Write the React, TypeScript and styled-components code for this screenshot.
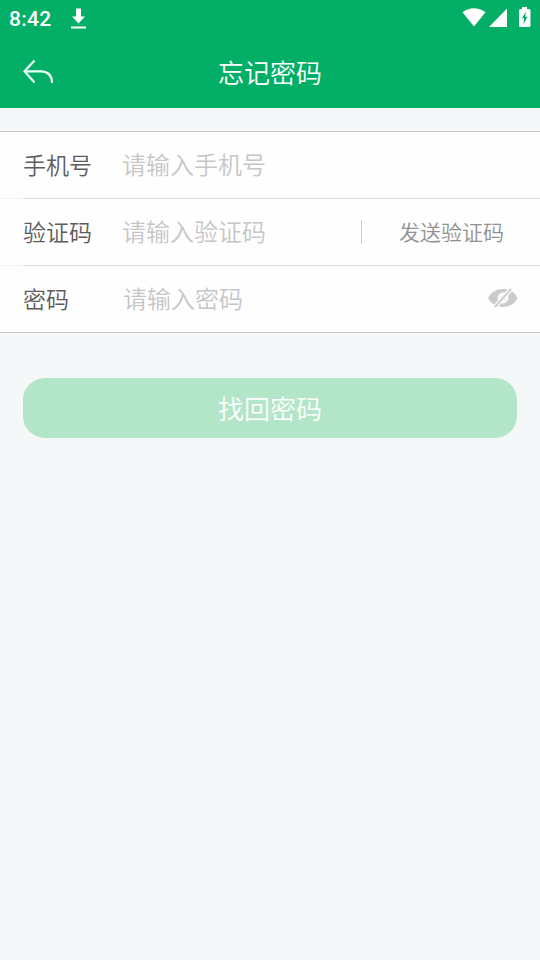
import React from "react";
import styled, { createGlobalStyle } from "styled-components";

const GlobalStyle = createGlobalStyle`
  * { box-sizing: border-box; }
  body {
    margin: 0;
    background: #f4f8f9;
    font-family: Roboto, "Noto Sans CJK SC", sans-serif;
  }
`;

const Screen = styled.div`
  display: flex;
  flex-direction: column;
  width: 540px;
  height: 960px;
  overflow: hidden;
  background: #f4f8f9;
`;

const StatusBar = styled.div`
  display: flex;
  align-items: flex-start;
  justify-content: space-between;
  height: 36px;
  padding: 0 9px;
  background: #03af66;
  color: #fff;
`;

const StatusGroup = styled.div`
  display: flex;
  height: 36px;
`;

const Clock = styled.span`
  width: 61px;
  font-size: 21px;
  font-weight: 500;
  line-height: 38px;
  letter-spacing: 0.3px;
`;

const Glyph = styled.svg`
  display: block;
  flex: none;
`;

const Header = styled.header`
  display: grid;
  grid-template-columns: 60px 1fr 60px;
  height: 72px;
  padding: 0 23px;
  background: #03af66;
  color: #fff;
`;

const BackButton = styled.button`
  display: flex;
  align-items: flex-start;
  padding: 23px 0 0;
  border: 0;
  background: none;
  color: #e9fff5;
`;

const Title = styled.h1`
  margin: 0;
  font-size: 26px;
  font-weight: 350;
  line-height: 71px;
  text-align: center;
  font-family: "Noto Sans CJK SC", sans-serif;
`;

const Form = styled.form`
  display: flex;
  flex-direction: column;
  flex: 1;
`;

const FieldList = styled.div`
  margin-top: 23px;
  border-top: 1px solid #c9cbca;
  border-bottom: 1px solid #c9cbca;
  background: #fefefe;
`;

const Field = styled.div`
  display: flex;
  align-items: center;
  height: 67px;
  padding: 0 0 1px 23px;
  background: linear-gradient(to right, #f5f5f5 23px, #dddddd 23px) bottom / 100% 1px no-repeat;
  &:last-child {
    height: 66px;
    padding-bottom: 0;
    background: none;
  }
`;

const Label = styled.label`
  flex: none;
  width: 99px;
  padding-bottom: 2px;
  color: #5c5c5c;
  font: 350 23px/34px "Noto Sans CJK SC", sans-serif;
`;

const Input = styled.input<{ $indent?: number }>`
  flex: 1;
  min-width: 0;
  height: 40px;
  padding: 0 0 3px ${(p) => p.$indent ?? 0}px;
  border: 0;
  outline: 0;
  background: transparent;
  font: 350 24px/36px "Noto Sans CJK SC", sans-serif;
  &::placeholder {
    color: #c6c6c6;
    opacity: 1;
  }
`;

const SendCode = styled.button`
  width: 179px;
  height: 24px;
  padding: 0 0 2px 1px;
  border: 0;
  border-left: 1px solid #cccccc;
  background: none;
  color: #919191;
  font: 350 21px/22px "Noto Sans CJK SC", sans-serif;
`;

const EyeButton = styled.button`
  margin-right: 22px;
  padding: 0 0 2px;
  border: 0;
  background: none;
`;

const Submit = styled.button`
  height: 60px;
  margin: 45px 23px 0;
  padding: 0;
  border: 0;
  border-radius: 22px;
  background: #b3e5c8;
  color: #fff;
  font: 350 26px/60px "Noto Sans CJK SC", sans-serif;
`;

export default function App() {
  return (
    <>
      <GlobalStyle />
      <Screen>
        <StatusBar>
          <StatusGroup>
            <Clock>8:42</Clock>
            <Glyph width="17" height="36" viewBox="70 0 17 36" fill="#fff">
              <path d="M76 8.500h5v8h4L78.500 23.500 72 16.500h4zM71 26.500h15v2H71z" />
            </Glyph>
          </StatusGroup>
          <Glyph width="69" height="36" viewBox="462 0 69 36" fill="#fff">
            <path d="M462.500 12.200Q474 4.500 485.500 12.200L474 26.500z" />
            <path d="M507 8.500V27H489z" />
            <path d="M522 7h5v2h2q1.500 0 1.500 1.500V25.500q0 1.500-1.500 1.500h-8.500q-1.500 0-1.500-1.500V10.500q0-1.500 1.500-1.500h1.500z" />
            <path d="M526 11.500L522 18.200h2.200L523.500 24l4-7.300h-2.300z" fill="#03af66" />
          </Glyph>
        </StatusBar>
        <Header>
          <BackButton type="button" aria-label="返回">
            <Glyph width="32" height="26" viewBox="0 0 32 26" fill="none" stroke="currentColor" strokeWidth="2.200">
              <path d="M11.500 1.500L1.500 12.300 11.500 23.500M1.500 12.300H18C25 12.500 29 16 29 24" />
            </Glyph>
          </BackButton>
          <Title>忘记密码</Title>
        </Header>
        <Form>
          <FieldList>
            <Field>
              <Label htmlFor="phone">手机号</Label>
              <Input id="phone" type="tel" placeholder="请输入手机号" />
            </Field>
            <Field>
              <Label htmlFor="code">验证码</Label>
              <Input id="code" placeholder="请输入验证码" />
              <SendCode type="button">发送验证码</SendCode>
            </Field>
            <Field>
              <Label htmlFor="password">密码</Label>
              <Input id="password" type="password" placeholder="请输入密码" $indent={1} />
              <EyeButton type="button" aria-label="显示密码">
                <Glyph width="30" height="20" viewBox="0 0 30 20">
                  <path d="M0 10C3 4 9 1 15 1S27 4 29.500 10C27 16 21 19 15 19S3 16 0 10z" fill="#cbcbcb" />
                  <circle cx="15" cy="10" r="5.400" fill="#fefefe" />
                  <circle cx="15" cy="10" r="2.600" fill="#cbcbcb" />
                  <path d="M7 19L23 1" stroke="#fefefe" strokeWidth="4.400" />
                  <path d="M7 19L23 1" stroke="#cbcbcb" strokeWidth="1.900" />
                </Glyph>
              </EyeButton>
            </Field>
          </FieldList>
          <Submit type="button">找回密码</Submit>
        </Form>
      </Screen>
    </>
  );
}
